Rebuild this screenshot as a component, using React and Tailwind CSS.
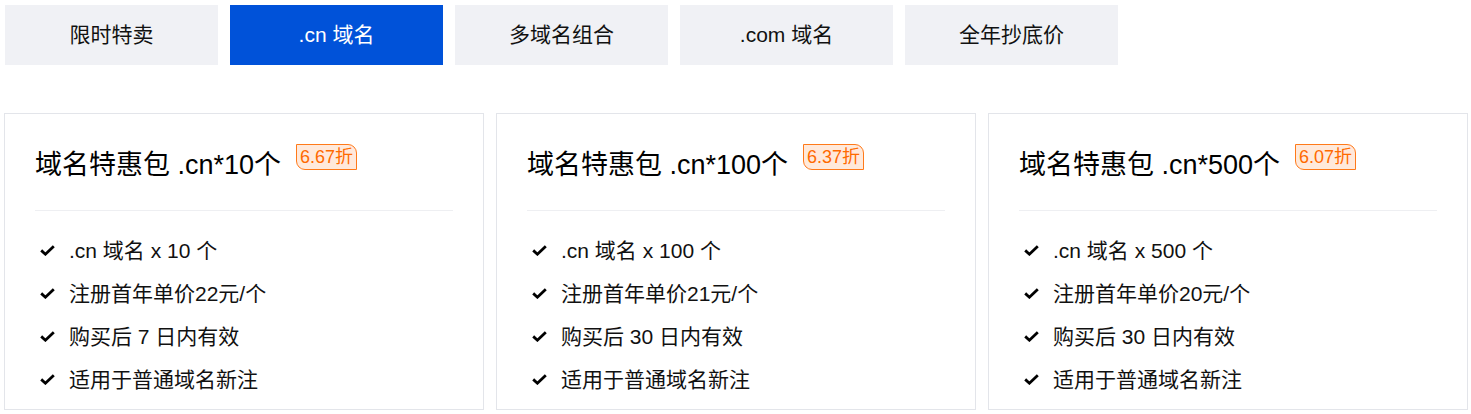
import React from "react";

const tabs = ["限时特卖", ".cn 域名", "多域名组合", ".com 域名", "全年抄底价"];

const cards = [
  { title: "域名特惠包 .cn*10个", badge: "6.67折", items: [".cn 域名 x 10 个", "注册首年单价22元/个", "购买后 7 日内有效", "适用于普通域名新注"] },
  { title: "域名特惠包 .cn*100个", badge: "6.37折", items: [".cn 域名 x 100 个", "注册首年单价21元/个", "购买后 30 日内有效", "适用于普通域名新注"] },
  { title: "域名特惠包 .cn*500个", badge: "6.07折", items: [".cn 域名 x 500 个", "注册首年单价20元/个", "购买后 30 日内有效", "适用于普通域名新注"] },
];

function Check() {
  return (
    <svg width="15" height="11" viewBox="0 0 15 11" className="shrink-0">
      <path d="M1.2 5.4 L5.4 9.2 L13.8 1.2" fill="none" stroke="#000" strokeWidth="2.8" strokeLinejoin="miter" />
    </svg>
  );
}

export default function App() {
  return (
    <div className="w-[1471px] h-[414px] bg-white overflow-hidden text-black" style={{ fontFamily: '"Liberation Sans", Arial, "Noto Sans CJK SC", sans-serif' }}>
      <div className="flex gap-[12px] pl-[5px] pt-[5px]">
        {tabs.map((t, i) => (
          <div
            key={t}
            className={
              "w-[213px] h-[60px] flex items-center justify-center text-[21px] " +
              (i === 1 ? "bg-[#0052d9] text-white" : "bg-[#f0f1f5] text-[#111]")
            }
          >
            {t}
          </div>
        ))}
      </div>
      <div className="flex gap-[12px] pl-[4px] mt-[48px]">
        {cards.map((c) => (
          <div key={c.title} className="w-[480px] h-[297px] border border-[#e3e5ea] px-[30px] pt-[33px] shrink-0">
            <div className="flex items-start pb-[27px] border-b border-[#eeeff2]">
              <span className="text-[27px] leading-[36px]">{c.title}</span>
              <span className="ml-[15px] mt-[-3px] h-[26px] px-[3px] flex items-center text-[18px] text-[#ff6a00] bg-[#ffe9db] border border-[#ff7a1a] rounded-tr-[9px] rounded-bl-[9px]">
                {c.badge}
              </span>
            </div>
            <ul className="pt-[18px]">
              {c.items.map((it) => (
                <li key={it} className="h-[43px] flex items-center gap-[14px] pl-[5px] text-[21px] text-[#111]">
                  <Check />
                  <span>{it}</span>
                </li>
              ))}
            </ul>
          </div>
        ))}
      </div>
    </div>
  );
}
